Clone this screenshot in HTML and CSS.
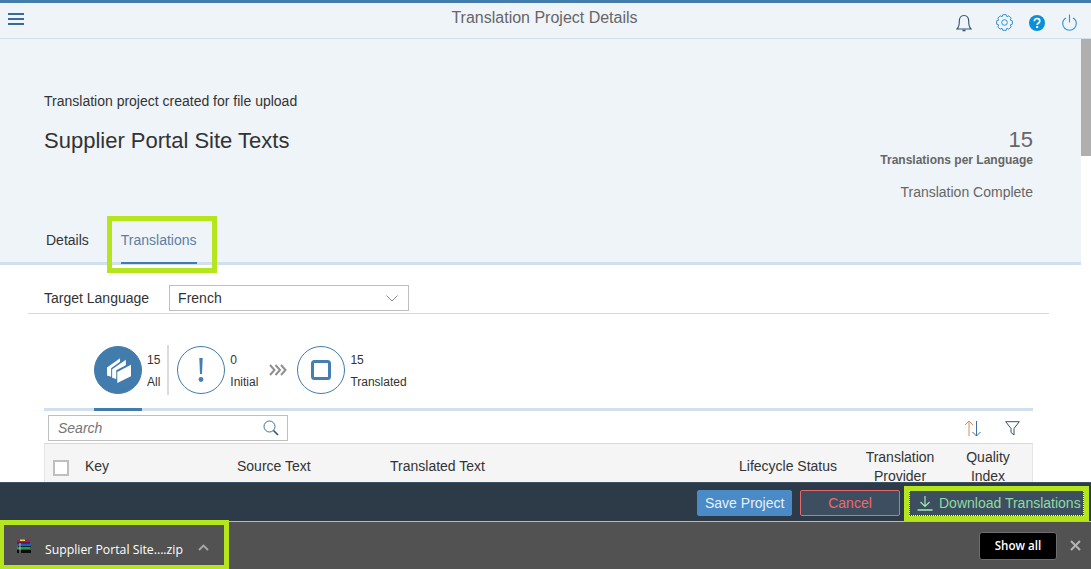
FILE: index.html
```html
<!DOCTYPE html>
<html lang="en">
<head>
    <meta charset="UTF-8">
    <meta name="viewport" content="width=device-width, initial-scale=1.0">
    <title>Translation Project Details</title>
    <link rel="stylesheet" href="styles.css">
</head>
<body>
    <header class="topbar">
        <button class="menu-btn" aria-label="Menu">
            <svg width="16" height="12" viewBox="0 0 16 12"><path d="M0 1h16M0 6h16M0 11h16" stroke="#3b6a99" stroke-width="2"/></svg>
        </button>
        <h1 class="topbar-title">Translation Project Details</h1>
        <div class="topbar-icons">
            <!-- bell -->
            <svg class="bell" width="16" height="18" viewBox="0 0 16 18" fill="none"><path d="M1 15c2-2 2.300-4 2.300-7.500C3.300 4 5 1.500 8 1.500s4.700 2.500 4.700 6c0 3.500.3 5.500 2.300 7.500z" stroke="#33506e" stroke-width="1.100"/><path d="M6.500 16.500h3" stroke="#33506e" stroke-width="1.500"/></svg>
            <!-- gear -->
            <svg class="gear" width="17" height="17" viewBox="-8.500 -8.500 17 17" fill="none"><polygon points="-2.360,-5.840 -1.660,-7.830 1.660,-7.830 2.360,-5.840 2.460,-5.800 4.360,-6.710 6.710,-4.360 5.800,-2.460 5.840,-2.360 7.830,-1.660 7.830,1.660 5.840,2.360 5.800,2.460 6.710,4.360 4.360,6.710 2.460,5.800 2.360,5.840 1.660,7.830 -1.660,7.830 -2.360,5.840 -2.460,5.800 -4.360,6.710 -6.710,4.360 -5.800,2.460 -5.840,2.360 -7.830,1.660 -7.830,-1.660 -5.840,-2.360 -5.800,-2.460 -6.710,-4.360 -4.360,-6.710 -2.460,-5.800" stroke="#2b95d6"/><circle r="2.800" stroke="#2b95d6"/></svg>
            <!-- help -->
            <svg class="help" width="16" height="16" viewBox="0 0 16 16"><circle cx="8" cy="8" r="8" fill="#0a8fdc"/><path d="M5.300 6.200C5.400 4.500 6.500 3.500 8 3.500c1.600 0 2.800 1 2.800 2.400 0 1.200-.7 1.800-1.500 2.300-.8.500-1.100.9-1.100 1.800" stroke="#fff" stroke-width="1.700" fill="none"/><rect x="7.200" y="11" width="2" height="2" fill="#fff"/></svg>
            <!-- power -->
            <svg class="power" width="15" height="17" viewBox="0 0 15 17" fill="none"><path d="M4 4C2 5 .7 7 .7 9.500a6.800 6.800 0 0 0 13.600 0C14.300 7 13 5 11 4" stroke="#2b95d6" stroke-width="1.100"/><path d="M7.500 .5v8" stroke="#2b95d6" stroke-width="1.100"/></svg>
        </div>
    </header>

    <div class="page">
        <main class="content">
            <section class="object-header">
                <div class="object-summary">
                    <div>
                        <p class="object-sub">Translation project created for file upload</p>
                        <h2 class="object-title">Supplier Portal Site Texts</h2>
                    </div>
                    <div class="object-stats">
                        <div class="stat-number">15</div>
                        <div class="stat-label">Translations per Language</div>
                        <div class="stat-status">Translation Complete</div>
                    </div>
                </div>
                <nav class="tabs">
                    <a class="tab">Details</a>
                    <a class="tab tab-active">Translations</a>
                </nav>
            </section>

            <section class="target-row">
                <label class="target-label">Target Language</label>
                <div class="select">
                    <span>French</span>
                    <svg width="12" height="7" viewBox="0 0 12 7" fill="none"><path d="M.5 .5L6 6l5.500-5.500" stroke="#8a8a8a"/></svg>
                </div>
            </section>

            <section class="filter-bar">
                <div class="filter filter-selected">
                    <span class="filter-circle filter-circle-solid">
                        <svg class="stack-icon" width="24" height="25" viewBox="0 0 70 73" fill="#fff">
                            <polygon points="0,28 38,1 38,11 12,30 12,55 0,51"/>
                            <polygon points="15,33 55,5 55,21 27,36 27,61 15,58"/>
                            <polygon points="30,41 70,20 70,53 30,73"/>
                        </svg>
                    </span>
                    <span class="filter-text"><span>15</span><span>All</span></span>
                </div>
                <span class="filter-sep"></span>
                <div class="filter">
                    <span class="filter-circle">
                        <svg width="6" height="24" viewBox="0 0 6 24"><path d="M1.300 0h3.400l-.7 16H2z" fill="#447fb4"/><circle cx="3" cy="21.500" r="2.400" fill="#447fb4"/></svg>
                    </span>
                    <span class="filter-text"><span>0</span><span>Initial</span></span>
                </div>
                <svg class="chevrons" width="18" height="12" viewBox="0 0 18 12" fill="none"><path d="M1 1l4.500 5L1 11M6.500 1L11 6l-4.500 5M12 1l4.500 5-4.500 5" stroke="#8f8f8f" stroke-width="2"/></svg>
                <div class="filter">
                    <span class="filter-circle">
                        <svg width="20" height="20" viewBox="0 0 20 20" fill="none"><rect x="1.500" y="1.500" width="17" height="17" rx="2" stroke="#447fb4" stroke-width="3"/></svg>
                    </span>
                    <span class="filter-text"><span>15</span><span>Translated</span></span>
                </div>
            </section>
            <div class="filter-rule"><span class="filter-rule-mark"></span></div>

            <section class="table-tools">
                <div class="search">
                    <span class="search-text">Search</span>
                    <svg width="16" height="16" viewBox="0 0 16 16" fill="none"><circle cx="6.500" cy="6.500" r="5.500" stroke="#3f6f9e"/><path d="M10.500 10.500l4.500 4.500" stroke="#33506e" stroke-width="1.600"/></svg>
                </div>
                <div class="table-actions">
                    <svg width="18" height="17" viewBox="0 0 18 17" fill="none"><path d="M5 16V1M1 5l4-4 4 4" stroke="#d98a5f"/><path d="M12.500 1v15M8.500 12l4 4 4-4" stroke="#3f6f9e"/></svg>
                    <svg width="15" height="15" viewBox="0 0 15 15" fill="none"><path d="M.7 .7h13.600L9 7.500V14l-3-2.500v-4z" stroke="#33506e"/></svg>
                </div>
            </section>

            <section class="table-head">
                <span class="check-cell"><span class="checkbox"></span></span>
                <span>Key</span>
                <span>Source Text</span>
                <span>Translated Text</span>
                <span>Lifecycle Status</span>
                <span class="col-center">Translation Provider</span>
                <span class="col-center">Quality Index</span>
            </section>
        </main>
        <div class="scrollbar"><div class="scrollbar-thumb"></div></div>
    </div>

    <footer class="action-bar">
        <button class="btn btn-save">Save Project</button>
        <button class="btn btn-cancel">Cancel</button>
        <button class="btn btn-download">
            <svg width="16" height="16" viewBox="0 0 16 16" fill="none"><path d="M8 1v10M3.500 7L8 11.500 12.500 7" stroke="#a4ecb2" stroke-width="1.200"/><path d="M.5 15h15" stroke="#a4ecb2" stroke-width="1.500"/></svg>
            Download Translations
        </button>
    </footer>

    <div class="download-shelf">
        <div class="download-item">
            <svg class="rar-icon" width="16" height="16" viewBox="0 0 16 16">
                <path d="M1 2l11-1 2 2-1 2H1z" fill="#a01a6c"/>
                <rect x="4" y="1.500" width="5" height="1.500" fill="#e8d24a"/>
                <rect x="2" y="5" width="13" height="3.500" fill="#1d5fbf"/>
                <rect x="1" y="8.500" width="13" height="3.500" fill="#1f9a58"/>
                <rect x="1" y="12" width="14" height="3" fill="#0c0c0c"/>
                <path d="M1 5h13M2 8.500h13M1 12h13" stroke="#101010" stroke-width=".8"/>
                <path d="M4 5v10" stroke="#d8d8d8" stroke-width=".8"/>
            </svg>
            <span class="download-name">Supplier Portal Site....zip</span>
            <svg class="caret-up" width="11" height="7" viewBox="0 0 11 7" fill="none"><path d="M1 6l4.500-4.500L10 6" stroke="#a8a8a8" stroke-width="1.800"/></svg>
        </div>
        <div class="shelf-right">
            <button class="show-all">Show all</button>
            <svg class="shelf-close" width="11" height="11" viewBox="0 0 11 11" fill="none"><path d="M1 1l9 9M10 1l-9 9" stroke="#b4b4b4" stroke-width="2"/></svg>
        </div>
    </div>
</body>
</html>
```

FILE: styles.css
```css
*, *::after {
    box-sizing: border-box;
}
html, body {
    height: 100%;
}
body {
    display: flex;
    flex-direction: column;
    height: 569px;
    margin: 0;
    overflow: hidden;
    background-color: #fff;
    color: #333;
    font-family: "Liberation Sans", Arial, sans-serif;
    font-size: 14px;
}
button {
    font-family: inherit;
}

/* top bar */
.topbar {
    display: flex;
    flex: none;
    align-items: center;
    justify-content: space-between;
    position: relative;
    height: 39px;
    padding: 0 14px 0 8px;
    border-top: 3px solid #427cac;
    border-bottom: 1px solid #d1e0ee;
    background-color: #eff4f9;
}
.menu-btn {
    display: flex;
    margin: -3px 0 0;
    padding: 0;
    border: none;
    background: none;
}
.topbar-title {
    position: absolute;
    left: 0;
    right: 2px;
    top: 6px;
    margin: 0;
    color: #666;
    font-size: 16px;
    font-weight: normal;
    line-height: 18px;
    text-align: center;
}
.topbar-icons {
    display: flex;
    align-items: center;
    margin-top: 4px;
}
.gear {
    margin-left: 24px;
}
.help {
    margin-left: 16px;
}
.power {
    margin-left: 17px;
}

/* page + fake scrollbar */
.page {
    display: flex;
    flex: 1;
    min-height: 0;
}
.content {
    flex: 1;
    min-width: 0;
    overflow: hidden;
}
.scrollbar {
    flex: none;
    width: 10px;
    background-color: #fff;
}
.scrollbar-thumb {
    height: 117px;
    background-color: #afafaf;
}

/* object header */
.object-header {
    position: relative;
    height: 226px;
    padding: 0 48px 0 44px;
    border-bottom: 3px solid #d1e0ee;
    background-color: #eff4f9;
}
.object-summary {
    display: flex;
    justify-content: space-between;
    height: 174px;
}
.object-sub {
    margin: 54px 0 0;
    line-height: 16px;
}
.object-title {
    margin: 19px 0 0;
    font-size: 22px;
    font-weight: normal;
    line-height: 26px;
}
.object-stats {
    padding-top: 89px;
    text-align: right;
}
.stat-number {
    color: #666;
    font-size: 22px;
    line-height: 24px;
}
.stat-label {
    margin-top: 1px;
    color: #666;
    font-size: 12px;
    font-weight: bold;
    line-height: 14px;
}
.stat-status {
    margin-top: 17px;
    color: #666;
    line-height: 16px;
}
.tabs {
    display: flex;
    gap: 32px;
    padding-left: 2px;
}
.tab {
    position: relative;
    height: 51px;
    padding-top: 19px;
    line-height: 16px;
}
.tab-active {
    border-bottom: 2px solid #427cac;
    color: #5b7fa3;
}
/* the green marker boxes lie over the screenshot content */
.tab-active::after {
    content: "";
    position: absolute;
    top: 3px;
    left: -14px;
    right: -20px;
    bottom: -11px;
    border: 5px solid #b5e61d;
}

/* target language */
.target-row {
    display: flex;
    align-items: flex-end;
    gap: 20px;
    height: 49px;
    margin: 0 32px 0 28px;
    padding: 0 0 2px 16px;
    border-bottom: 1px solid #d9d9d9;
}
.target-label {
    line-height: 26px;
}
.select {
    display: flex;
    align-items: center;
    justify-content: space-between;
    width: 240px;
    height: 26px;
    padding: 0 10px 0 8px;
    border: 1px solid #bfbfbf;
    background-color: #fff;
}

/* icon tab filter */
.filter-bar {
    display: flex;
    align-items: center;
    height: 48px;
    margin: 32px 0 0 94px;
}
.filter {
    display: flex;
    align-items: center;
}
.filter-circle {
    display: flex;
    flex: none;
    align-items: center;
    justify-content: center;
    width: 48px;
    height: 48px;
    border: 1px solid #427cac;
    border-radius: 50%;
}
.filter-circle-solid {
    background-color: #427cac;
}
.stack-icon {
    margin-left: 1px;
}
.filter-text {
    display: flex;
    flex-direction: column;
    gap: 8px;
    margin: 2px 0 0 5px;
    font-size: 12px;
    line-height: 14px;
}
.filter-sep {
    width: 2px;
    height: 50px;
    margin: 0 8px 0 7px;
    background-color: #dcdcdc;
}
.chevrons {
    margin: 0 10px 0 11px;
}
.filter-rule {
    height: 3px;
    margin: 14px 48px 0 44px;
    background-color: #d1e0ee;
}
.filter-rule-mark {
    display: block;
    width: 48px;
    height: 3px;
    margin-left: 50px;
    background-color: #427cac;
}

/* table */
.table-tools {
    display: flex;
    align-items: center;
    justify-content: space-between;
    height: 26px;
    margin: 4px 48px 0 48px;
}
.search {
    display: flex;
    align-items: center;
    justify-content: space-between;
    width: 240px;
    height: 26px;
    padding: 0 8px 0 9px;
    border: 1px solid #bfbfbf;
}
.search-text {
    color: #757575;
    font-style: italic;
}
.table-actions {
    display: flex;
    align-items: center;
    gap: 23px;
    margin-right: 13px;
}
.table-head {
    display: grid;
    grid-template-columns: 40px 152px 153px 349px 113px 96px 80px;
    align-items: center;
    height: 62px;
    margin: 2px 48px 0 44px;
    padding-bottom: 16px;
    border-top: 1px solid #d9d9d9;
    border-left: 1px solid #e5e5e5;
    border-right: 1px solid #e5e5e5;
    background-color: #f5f5f5;
    line-height: 19px;
}
.check-cell {
    display: flex;
    padding: 2px 0 0 8px;
}
.checkbox {
    width: 16px;
    height: 16px;
    border: 2px solid #bfbfbf;
    background-color: #fff;
}
.col-center {
    text-align: center;
}

/* bottom action bar */
.action-bar {
    display: flex;
    flex: none;
    align-items: center;
    justify-content: flex-end;
    gap: 8px;
    height: 39px;
    padding: 2px 7px 0 0;
    border-top: 1px solid #3e5266;
    background-color: #2d3a47;
}
.btn {
    height: 26px;
    padding: 0 7px;
    border-radius: 2px;
    font-size: 14px;
    white-space: nowrap;
}
.btn-save {
    width: 95px;
    border: 1px solid #4a8ac6;
    background-color: #4a8ac6;
    color: #e8f1f8;
}
.btn-cancel {
    width: 100px;
    border: 1px solid #e5686b;
    background-color: #3d4e60;
    color: #f2686b;
}
.btn-download {
    display: flex;
    position: relative;
    align-items: center;
    gap: 6px;
    width: 175px;
    margin-left: 1px;
    padding: 0 0 0 7px;
    border: 1px dotted #fff;
    border-radius: 0;
    background-color: #3d4e60;
    color: #8fdca0;
}
.btn-download::after {
    content: "";
    position: absolute;
    top: -5px;
    left: -6px;
    right: -6px;
    bottom: -6px;
    border: 5px solid #b5e61d;
}

/* browser download shelf */
.download-shelf {
    display: flex;
    flex: none;
    align-items: center;
    justify-content: space-between;
    height: 48px;
    border-top: 1px solid #b9b9b9;
    background-color: #525252;
}
.download-item {
    display: flex;
    position: relative;
    align-items: center;
    height: 47px;
    padding-left: 16px;
}
.download-item::after {
    content: "";
    position: absolute;
    top: -2px;
    left: 0;
    width: 229px;
    bottom: 0;
    border: 5px solid #b5e61d;
    border-left-width: 4px;
    border-bottom-width: 4px;
}
.download-name {
    margin: 7px 0 0 13px;
    color: #fff;
    font-family: "Open Sans", "Liberation Sans", sans-serif;
    font-size: 12.250px;
}
.caret-up {
    margin: 3px 0 0 15px;
}
.shelf-right {
    display: flex;
    align-items: center;
    padding-right: 10px;
}
.show-all {
    width: 78px;
    height: 28px;
    padding: 0;
    border: 1px solid #6e6e6e;
    border-radius: 3px;
    background-color: #000;
    color: #fff;
    font-family: "Open Sans", "Liberation Sans", sans-serif;
    font-size: 11.600px;
    font-weight: 600;
}
.shelf-close {
    margin-left: 13px;
}
```
